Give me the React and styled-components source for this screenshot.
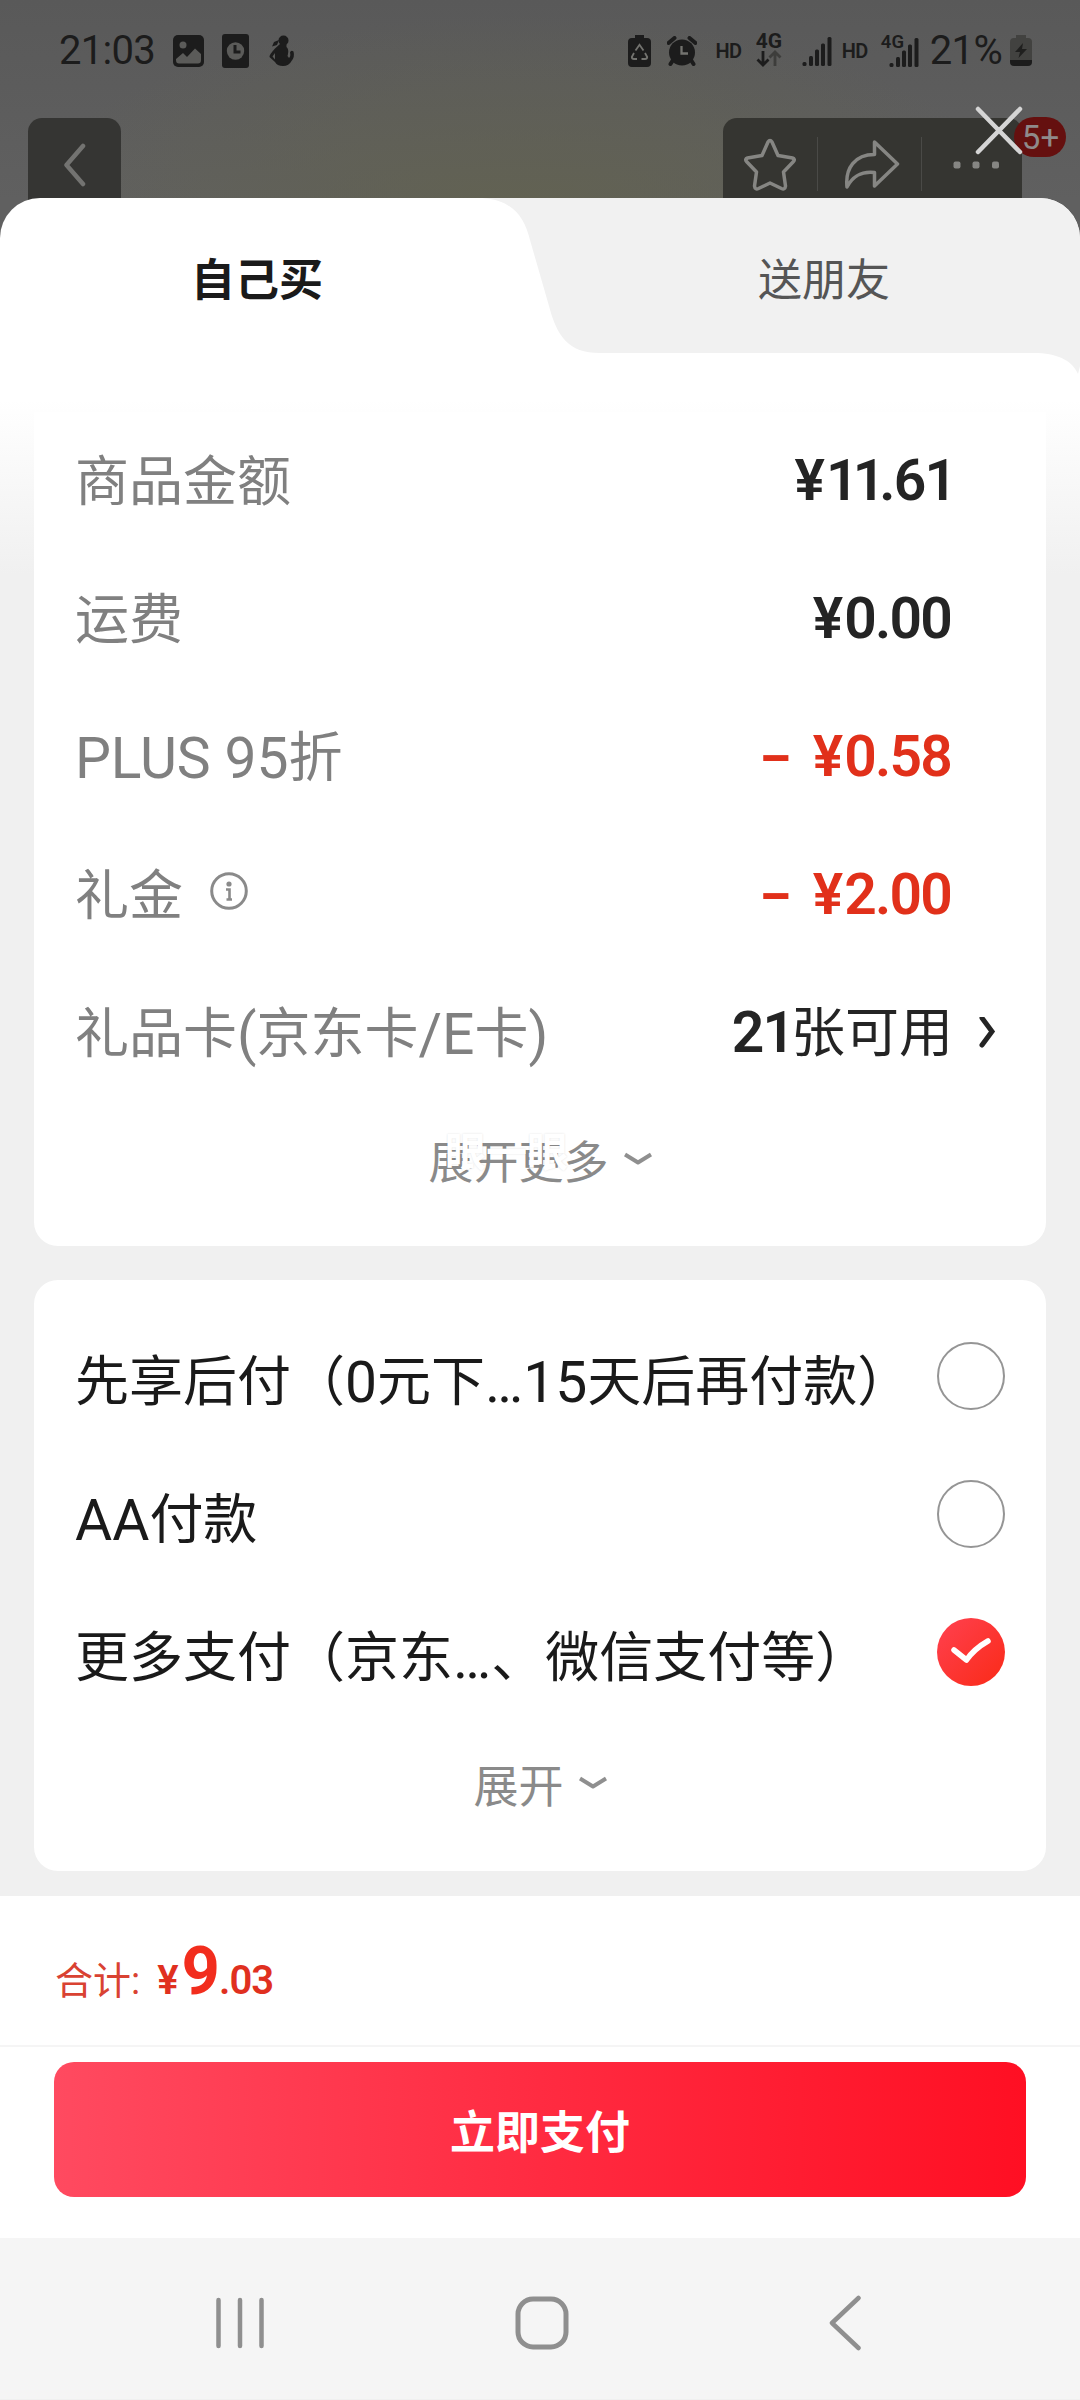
import React from 'react';
import styled, { createGlobalStyle } from 'styled-components';

const GlobalStyle = createGlobalStyle`
    * {
        box-sizing: border-box;
    }
    body {
        margin: 0;
        font-family: Roboto, 'Noto Sans CJK SC', sans-serif;
    }
    svg {
        display: block;
        flex: none;
    }
`;

const Screen = styled.div`
    width: 1080px;
    height: 2400px;
    overflow: hidden;
    display: flex;
    flex-direction: column;
    background:
        radial-gradient(ellipse 500px 200px at 520px 215px, rgba(98, 98, 80, 0.9), rgba(98, 98, 80, 0) 100%),
        linear-gradient(#595959, #606060 200px, #606060 300px);
`;

const StatusBar = styled.div`
    height: 118px;
    flex: none;
    display: flex;
    align-items: flex-start;
    justify-content: space-between;
    padding: 30px 48px 0 59px;
    color: #1c1c1c;
`;

const StatusGroup = styled.div`
    display: flex;
    align-items: center;
    height: 41px;
`;

const StatusItem = styled.div`
    margin-left: ${props => props.$left || 0}px;
    margin-top: ${props => props.$top || 0}px;
`;

const StatusText = styled.div`
    font-size: 40px;
    line-height: 41px;
    letter-spacing: -0.7px;
    margin-left: ${props => props.$left || 0}px;
`;

const SmallText = styled.div`
    font-size: 20px;
    line-height: 20px;
    font-weight: 600;
    letter-spacing: -0.5px;
    margin-left: ${props => props.$left || 0}px;
`;

const NetworkType = styled.div`
    width: 27px;
    height: 37px;
    margin-left: 14px;
    font-size: 21px;
    line-height: 18px;
    font-weight: 700;
    white-space: nowrap;
`;

const SimSignal = styled.div`
    position: relative;
    width: 38px;
    height: 34px;
    display: flex;
    align-items: flex-end;
    justify-content: flex-end;
    margin-left: 13px;
`;

const SimLabel = styled.div`
    position: absolute;
    top: -2px;
    left: 0;
    font-size: 18.5px;
    line-height: 20px;
    font-weight: 600;
`;

const TopActions = styled.div`
    height: 80px;
    flex: none;
    display: flex;
    justify-content: space-between;
    padding: 0 58px 0 28px;
`;

const BackButton = styled.div`
    width: 93px;
    height: 84px;
    padding: 25px 0 0 35px;
    border-radius: 14px 14px 0 0;
    background: #353533;
`;

const ActionGroup = styled.div`
    position: relative;
    width: 299px;
    height: 84px;
    display: flex;
    border-radius: 14px 14px 0 0;
    background: #353531;
`;

const Action = styled.div`
    width: ${props => props.$width}px;
    display: flex;
    justify-content: center;
    padding-top: ${props => props.$top}px;
    padding-left: ${props => props.$left || 0}px;
`;

const Divider = styled.div`
    width: 1px;
    height: 54px;
    margin-top: 19px;
    background: #4a4a47;
`;

const Badge = styled.div`
    position: absolute;
    left: 291px;
    top: -1px;
    width: 52px;
    height: 40px;
    border-radius: 20px;
    background: #65100f;
    color: #8f8a8a;
    font-size: 33px;
    line-height: 41px;
    text-align: center;
    padding-left: 1px;
`;

const CloseIcon = styled.svg`
    position: absolute;
    left: 251px;
    top: -14px;
`;

const Sheet = styled.div`
    position: relative;
    flex: 1;
    display: flex;
    flex-direction: column;
    border-radius: 40px 40px 0 0;
    overflow: hidden;
    background: linear-gradient(#fff 202px, #f0f0f0 377px);
`;

const Tabs = styled.div`
    position: relative;
    display: flex;
    height: 214px;
    flex: none;
    &::before {
        content: '';
        position: absolute;
        inset: 0;
        background: #f1f1f1;
        clip-path: path('M482 0 C512 2 524 18 530 42 L549 108 C557 138 568 155 600 155 L1038 155 C1060 156 1073 164 1078 176 L1080 168 V0 Z');
    }
`;

const Tab = styled.div`
    position: relative;
    width: ${props => props.$active ? 514 : 566}px;
    height: 155px;
    padding-left: ${props => props.$active ? 0 : 54}px;
    padding-top: 11px;
    display: flex;
    align-items: center;
    justify-content: center;
    font-size: 44px;
    line-height: 60px;
    font-weight: ${props => props.$active ? 700 : 400};
    color: ${props => props.$active ? '#1a1a1a' : '#555'};
`;

const Card = styled.div`
    width: 1012px;
    height: ${props => props.$height}px;
    flex: none;
    margin: 0 34px ${props => props.$gap}px;
    padding: ${props => props.$top || 0}px 41px 0 41px;
    border-radius: ${props => props.$flatTop ? '0 0 24px 24px' : '24px'};
    background: #fff;
`;

const Row = styled.div`
    height: 138px;
    display: flex;
    align-items: center;
    justify-content: space-between;
`;

const Label = styled.div`
    display: flex;
    align-items: center;
    font-size: 54px;
    line-height: 70px;
    white-space: pre;
    color: ${props => props.$dark ? '#1a1a1a' : '#808080'};
`;

const Latin = styled.span`
    font-size: 57px;
    letter-spacing: ${props => props.$spacing || 0}px;
`;

const Value = styled.div`
    display: flex;
    align-items: baseline;
    margin: -4px 54px 0 0;
    font-size: 57px;
    line-height: 70px;
    font-weight: 600;
    letter-spacing: -1.8px;
    color: ${props => props.$red ? '#e1301a' : '#242424'};
`;

const Minus = styled.span`
    margin-right: 29px;
    transform: scaleX(1.65);
`;

const Yen = styled.span`
    margin-right: 3px;
`;

// the digit 1 is set tighter than the others
const One = styled.span`
    letter-spacing: -6px;
`;

const Unit = styled.span`
    margin-left: 2px;
    font-size: 54px;
    font-weight: 400;
    letter-spacing: 0;
`;

const ValueLink = styled.div`
    display: flex;
    align-items: center;
    padding-right: 9px;
    ${Value} {
        margin-right: 26px;
    }
`;

const Expand = styled.div`
    position: relative;
    display: flex;
    align-items: center;
    justify-content: center;
    height: 119px;
    gap: 15px;
    font-size: 45px;
    line-height: 60px;
    color: #8a8a8a;
    svg {
        margin-top: -9px;
    }
`;

const Watermark = styled.div`
    position: absolute;
    left: 370px;
    top: 25px;
    font-size: 41px;
    line-height: 48px;
    font-weight: 700;
    color: #fff;
    text-shadow: 0 0 2px rgba(0, 0, 0, 0.12);
`;

const Radio = styled.div`
    width: 68px;
    height: 68px;
    margin-top: -15px;
    border-radius: 50%;
    display: flex;
    align-items: center;
    justify-content: center;
    ${props => props.$checked
        ? `background: linear-gradient(135deg, #ff4150, #fa2a17);`
        : `border: 2.5px solid #959595;`}
`;

const Footer = styled.div`
    flex: none;
    height: 342px;
    background: #fff;
`;

const Total = styled.div`
    height: 151px;
    padding: 40px 0 0 55px;
    border-bottom: 2px solid #f5f5f5;
    display: flex;
    align-items: baseline;
    font-size: 38px;
    line-height: 70px;
    color: #d94232;
`;

const TotalPrice = styled.div`
    margin-left: 17px;
    font-size: 40px;
    font-weight: 600;
    letter-spacing: -1px;
    color: #e0301f;
    big {
        margin-left: 4px;
        font-size: 67px;
        font-weight: 700;
        color: #f22d1d;
    }
`;

const PayButton = styled.div`
    width: 972px;
    height: 135px;
    margin: 15px 54px 0;
    border-radius: 20px;
    background: linear-gradient(90deg, #ff4a60, #ff2b41 50%, #ff0f23);
    display: flex;
    align-items: center;
    justify-content: center;
    font-size: 45px;
    line-height: 60px;
    font-weight: 700;
    color: #fff;
    padding-top: 9px;
`;

const NavBar = styled.div`
    height: 161px;
    flex: none;
    padding: 9px 218px 0 216px;
    display: flex;
    align-items: center;
    justify-content: space-between;
    background: #f5f5f5;
`;

const HomeIcon = styled.svg`
    margin-left: -10px;
`;

const SignalBars = () => (
    <svg width="30" height="30" viewBox="0 0 30 30" fill="currentColor">
        <rect x="0.5" y="25" width="4" height="4" rx="1.5" />
        <rect x="7" y="19" width="4" height="10" rx="1.5" />
        <rect x="13" y="12.5" width="4" height="16.5" rx="1.5" />
        <rect x="19" y="6.5" width="4" height="22.5" rx="1.5" />
        <rect x="25.5" y="0" width="4" height="29" rx="1.5" />
    </svg>
);

const ChevronDown = () => (
    <svg width="28" height="14" viewBox="0 0 28 14" fill="none" stroke="#8f8f8f" strokeWidth="4">
        <path d="M1 2.5 L14 10.5 L27 2.5" strokeLinejoin="round" />
    </svg>
);

const Digits = ({ text }) => (
    <span>
        {text.split('').map((char, index) => (
            char === '1' ? <One key={index}>1</One> : char
        ))}
    </span>
);

const fees = [
    { label: '商品金额', value: '11.61' },
    { label: '运费', value: '0.00' },
    { label: <><Latin $spacing={-0.1}>PLUS 95</Latin>折</>, value: '0.58', minus: true },
    { label: '礼金', value: '2.00', minus: true, info: true },
];

const payments = [
    { label: <>先享后付（<Latin>0</Latin>元下<Latin>…15</Latin>天后再付款）</> },
    { label: <><Latin>AA</Latin>付款</> },
    { label: <>更多支付（京东<Latin>…</Latin>、微信支付等）</>, checked: true },
];

class App extends React.Component {
    renderStatusBar() {
        return (
            <StatusBar>
                <StatusGroup>
                    <StatusText>21:03</StatusText>
                    <StatusItem $left={18}>
                        <svg width="31" height="32" viewBox="0 0 31 32">
                            <rect width="31" height="32" rx="5" fill="#1c1c1c" />
                            <circle cx="10" cy="10" r="3.5" fill="#5b5b59" />
                            <path d="M3 24 L10 18 L14 22 L22 13.5 L28 19 V25 Q28 28.5 25 28.5 H6 Q3 28.5 3 25 Z" fill="#5b5b59" />
                        </svg>
                    </StatusItem>
                    <StatusItem $left={18}>
                        <svg width="27" height="34" viewBox="0 0 27 34">
                            <rect width="27" height="34" rx="3" fill="#1c1c1c" />
                            <circle cx="13.5" cy="17" r="8.7" fill="#5b5b59" />
                            <path d="M13 11 V18 H18.5" fill="none" stroke="#1c1c1c" strokeWidth="3" />
                        </svg>
                    </StatusItem>
                    <StatusItem $left={20}>
                        <svg width="26" height="31" viewBox="0 0 26 31" fill="#1c1c1c">
                            <circle cx="14.5" cy="5.5" r="5" />
                            <path d="M10 5 L8 10 L3 11.5 L5 7 Z" />
                            <path d="M11 9 H17.5 V12 Q20 14 19 19 L18.5 21 L20 23 Q22 21 21 17.5 Q22 14.5 24.5 16.5 Q26 22 22.5 26 Q20 31 14 31 Q8 31 6 27 L0.5 22 Q0 20 6 13.5 Z" />
                            <path d="M6 18 L3.5 21.5 L6 24.5 Z" fill="#5b5b59" />
                        </svg>
                    </StatusItem>
                </StatusGroup>
                <StatusGroup>
                    <svg width="23" height="32" viewBox="0 0 23 32">
                        <path d="M7 0 H16 V3 H19 Q23 3 23 7 V28 Q23 32 19 32 H4 Q0 32 0 28 V7 Q0 3 4 3 H7 Z" fill="#1c1c1c" />
                        <g fill="none" stroke="#73736f" strokeWidth="1.8">
                            <path d="M7.5 15.5 L11.5 9.8 L15.5 15.5" />
                            <path d="M6 18 L3.8 22 Q3.8 24 6 24 H9" />
                            <path d="M17 18 L19.2 22 Q19.2 24 17 24 H13.5" />
                        </g>
                    </svg>
                    <StatusItem $left={16}>
                        <svg width="30" height="30" viewBox="0 0 30 30">
                            <path d="M6 24 L3.5 28 M24 24 L26.5 28 M1.5 7 L7.5 2 M28.5 7 L22.5 2" stroke="#1c1c1c" strokeWidth="4" strokeLinecap="round" />
                            <circle cx="15" cy="16.5" r="13" fill="#1c1c1c" />
                            <path d="M14.5 10 V17.5 H21" fill="none" stroke="#73736f" strokeWidth="2.3" />
                        </svg>
                    </StatusItem>
                    <SmallText $left={18}>HD</SmallText>
                    <NetworkType>
                        4G
                        <svg width="26" height="17" viewBox="0 0 26 17" fill="none" strokeWidth="2.8">
                            <path d="M7 1 V15 M1.5 9.5 L7 15 L12.5 9.5" stroke="#1c1c1c" />
                            <path d="M19 16 V2 M13.5 7.5 L19 2 L24.5 7.5" stroke="#3d3d3b" />
                        </svg>
                    </NetworkType>
                    <StatusItem $left={19} $top={3}><SignalBars /></StatusItem>
                    <SmallText $left={10}>HD</SmallText>
                    <SimSignal>
                        <SimLabel>4G</SimLabel>
                        <SignalBars />
                    </SimSignal>
                    <StatusText $left={11}>21%</StatusText>
                    <StatusItem $left={8}>
                        <svg width="22" height="31" viewBox="0 0 22 31">
                            <path d="M6 0 H16 V3 H18 Q22 3 22 7 V25 H0 V7 Q0 3 4 3 H6 Z" fill="#424240" />
                            <path d="M0 25 H22 V27 Q22 31 18 31 H4 Q0 31 0 27 Z" fill="#1c1c1c" />
                            <path d="M13 8 L5 17 H10 L8.5 23 L17 14 H12 Z" fill="#1f1f1e" />
                        </svg>
                    </StatusItem>
                </StatusGroup>
            </StatusBar>
        )
    }

    renderTopActions() {
        return (
            <TopActions>
                <BackButton>
                    <svg width="24" height="44" viewBox="0 0 24 44" fill="none" stroke="#737371" strokeWidth="4.5" strokeLinecap="round" strokeLinejoin="round">
                        <path d="M20 3 L3.5 22 L20 41" />
                    </svg>
                </BackButton>
                <ActionGroup>
                    <Action $width={94} $top={20}>
                        <svg width="54" height="54" viewBox="0 0 54 54" fill="none" stroke="#868683" strokeWidth="3.5" strokeLinejoin="round">
                            <path d="M25 4 Q27 1 29 4 L35 17.5 L49.5 20 Q52.5 21 50.5 23.5 L40.5 34 L42.5 48 Q42 52 38.5 50.5 L27 45 L15.5 50.5 Q12 52 11.5 48 L13.5 34 L3.5 23.5 Q1.5 21 4.5 20 L19 17.5 Z" />
                        </svg>
                    </Action>
                    <Divider />
                    <Action $width={103} $top={21} $left={4}>
                        <svg width="56" height="52" viewBox="0 0 56 52" fill="none" stroke="#868683" strokeWidth="3.5" strokeLinejoin="round">
                            <path d="M30.5 3 L53.5 25 L30.5 47 V33.5 C17 32 9 37 3 48 C1 29 11 15.5 30.5 15.5 Z" />
                        </svg>
                    </Action>
                    <Divider />
                    <Action $width={100} $top={43} $left={9}>
                        <svg width="47" height="8" viewBox="0 0 47 8" fill="#868683">
                            <rect x="0.5" y="0.5" width="7" height="7" rx="2" />
                            <rect x="19.5" y="0.5" width="7" height="7" rx="2" />
                            <rect x="39" y="0.5" width="7" height="7" rx="2" />
                        </svg>
                    </Action>
                    <Badge>5+</Badge>
                    <CloseIcon width="50" height="52" viewBox="0 0 50 52">
                        <path d="M4 5 L46 48 M46 5 L4 48" stroke="#d5d5d5" strokeWidth="4.5" strokeLinecap="round" />
                    </CloseIcon>
                </ActionGroup>
            </TopActions>
        )
    }

    render() {
        return (
            <Screen>
                <GlobalStyle />
                {this.renderStatusBar()}
                {this.renderTopActions()}
                <Sheet>
                    <Tabs>
                        <Tab $active>自己买</Tab>
                        <Tab>送朋友</Tab>
                    </Tabs>
                    <Card $height={834} $gap={34} $top={2} $flatTop>
                        {fees.map((fee, index) => (
                            <Row key={index}>
                                <Label>
                                    {fee.label}
                                    {fee.info && (
                                        <StatusItem $left={27} $top={-13}>
                                            <svg width="38" height="38" viewBox="0 0 38 38" fill="none" stroke="#8a8a8a" strokeWidth="3">
                                                <circle cx="19" cy="19" r="17.3" />
                                                <circle cx="19" cy="12" r="2.6" fill="#8a8a8a" stroke="none" />
                                                <path d="M16 17.5 H19.5 V27 M16.5 27.5 H22" strokeWidth="2.6" />
                                            </svg>
                                        </StatusItem>
                                    )}
                                </Label>
                                <Value $red={fee.minus}>
                                    {fee.minus && <Minus>-</Minus>}
                                    <Yen>¥</Yen>
                                    <Digits text={fee.value} />
                                </Value>
                            </Row>
                        ))}
                        <Row>
                            <Label>礼品卡<Latin>(</Latin>京东卡<Latin>/E</Latin>卡<Latin>)</Latin></Label>
                            <ValueLink>
                                <Value><Digits text="21" /><Unit>张可用</Unit></Value>
                                <svg width="17" height="36" viewBox="0 0 17 36" fill="none" stroke="#242424" strokeWidth="5">
                                    <path d="M3 1 L13 14.5 L3 28" strokeLinecap="round" />
                                </svg>
                            </ValueLink>
                        </Row>
                        <Expand>
                            展开更多
                            <ChevronDown />
                            <Watermark>眼一眼</Watermark>
                        </Expand>
                    </Card>
                    <Card $height={591} $gap={25} $top={34}>
                        {payments.map((item, index) => (
                            <Row key={index}>
                                <Label $dark>{item.label}</Label>
                                <Radio $checked={item.checked}>
                                    {item.checked && (
                                        <svg width="42" height="30" viewBox="0 0 42 30" fill="none" stroke="#fff" strokeWidth="5.5" strokeLinecap="round" strokeLinejoin="round">
                                            <path d="M4 13 L16.5 23 Q24 12 38 4" />
                                        </svg>
                                    )}
                                </Radio>
                            </Row>
                        ))}
                        <Expand>
                            展开
                            <ChevronDown />
                        </Expand>
                    </Card>
                    <Footer>
                        <Total>
                            合计:
                            <TotalPrice>¥<big>9</big>.03</TotalPrice>
                        </Total>
                        <PayButton>立即支付</PayButton>
                    </Footer>
                    <NavBar>
                        <svg width="49" height="52" viewBox="0 0 49 52" stroke="#8f8f8f" strokeWidth="4.5" strokeLinecap="round">
                            <path d="M2.5 3 V49 M24 3 V49 M45.5 3 V49" />
                        </svg>
                        <HomeIcon width="54" height="54" viewBox="0 0 54 54" fill="none" stroke="#8f8f8f" strokeWidth="5">
                            <rect x="3" y="3" width="48" height="48" rx="15" />
                        </HomeIcon>
                        <svg width="34" height="56" viewBox="0 0 34 56" fill="none" stroke="#8f8f8f" strokeWidth="4.5" strokeLinecap="round" strokeLinejoin="round">
                            <path d="M30.5 3 L4 28 L30.5 53" />
                        </svg>
                    </NavBar>
                </Sheet>
            </Screen>
        )
    }
}

export default App;
